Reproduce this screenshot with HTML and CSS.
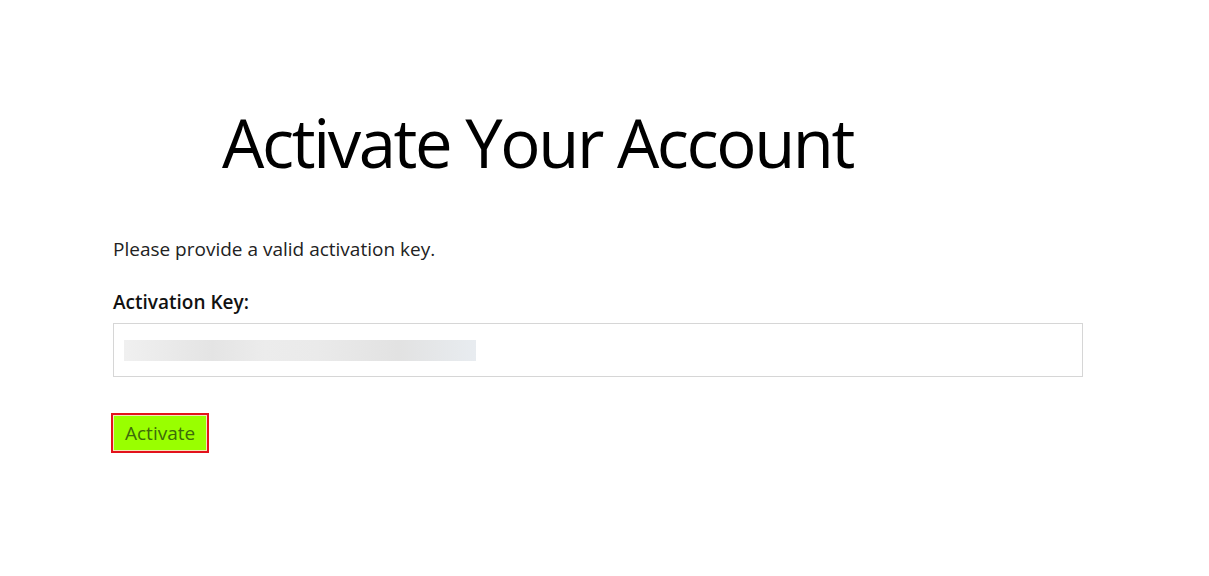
FILE: index.html
```html
<!DOCTYPE html>
<html lang="en">
<head>
<meta charset="utf-8">
<title>Activate Your Account</title>
<link rel="stylesheet" href="styles.css">
</head>
<body>
  <main class="page">
    <h1 class="title">Activate Your Account</h1>
    <p class="intro">Please provide a valid activation key.</p>
    <form class="form">
      <label class="label" for="key">Activation Key:</label>
      <div class="field">
        <span class="blur"></span>
      </div>
      <button type="button" class="btn">Activate</button>
    </form>
  </main>
</body>
</html>
```
FILE: styles.css
```css
html, body {
  margin: 0;
  padding: 0;
  background: #ffffff;
}
body {
  font-family: "Open Sans", "Noto Sans", sans-serif;
  color: #111;
}
.page {
  padding: 102px 0 0 113px;
  width: 970px;
}
.title {
  margin: 0 0 0 109px;
  font-weight: 400;
  font-size: 67px;
  line-height: 80px;
  letter-spacing: -2.4px;
  color: #000;
}
.intro {
  margin: 54px 0 0 0;
  font-size: 19px;
  line-height: 26px;
  color: #222;
}
.form {
  display: flex;
  flex-direction: column;
  align-items: flex-start;
}
.label {
  margin-top: 27px;
  font-size: 19px;
  font-weight: 600;
  line-height: 26px;
  color: #111;
}
.field {
  box-sizing: border-box;
  margin-top: 8px;
  width: 970px;
  height: 54px;
  border: 1px solid #d6d6d6;
  display: flex;
  align-items: center;
  padding-left: 10px;
}
.blur {
  display: block;
  width: 352px;
  height: 21px;
  background: linear-gradient(90deg, #f0f0f0 0%, #e4e4e4 25%, #ececec 40%, #eaeaea 55%, #e2e2e2 78%, #e8ecf0 100%);
  filter: blur(0.6px);
}
.btn {
  margin: 36px 0 0 -2px;
  box-sizing: border-box;
  height: 40px;
  padding: 0 12px;
  background: #99ff00;
  border: 2px solid #e3121c;
  box-shadow: inset 0 0 0 1px #f4e6b8;
  font-family: "Open Sans", "Noto Sans", sans-serif;
  font-size: 19px;
  color: #3d6b0a;
  cursor: pointer;
}
```
